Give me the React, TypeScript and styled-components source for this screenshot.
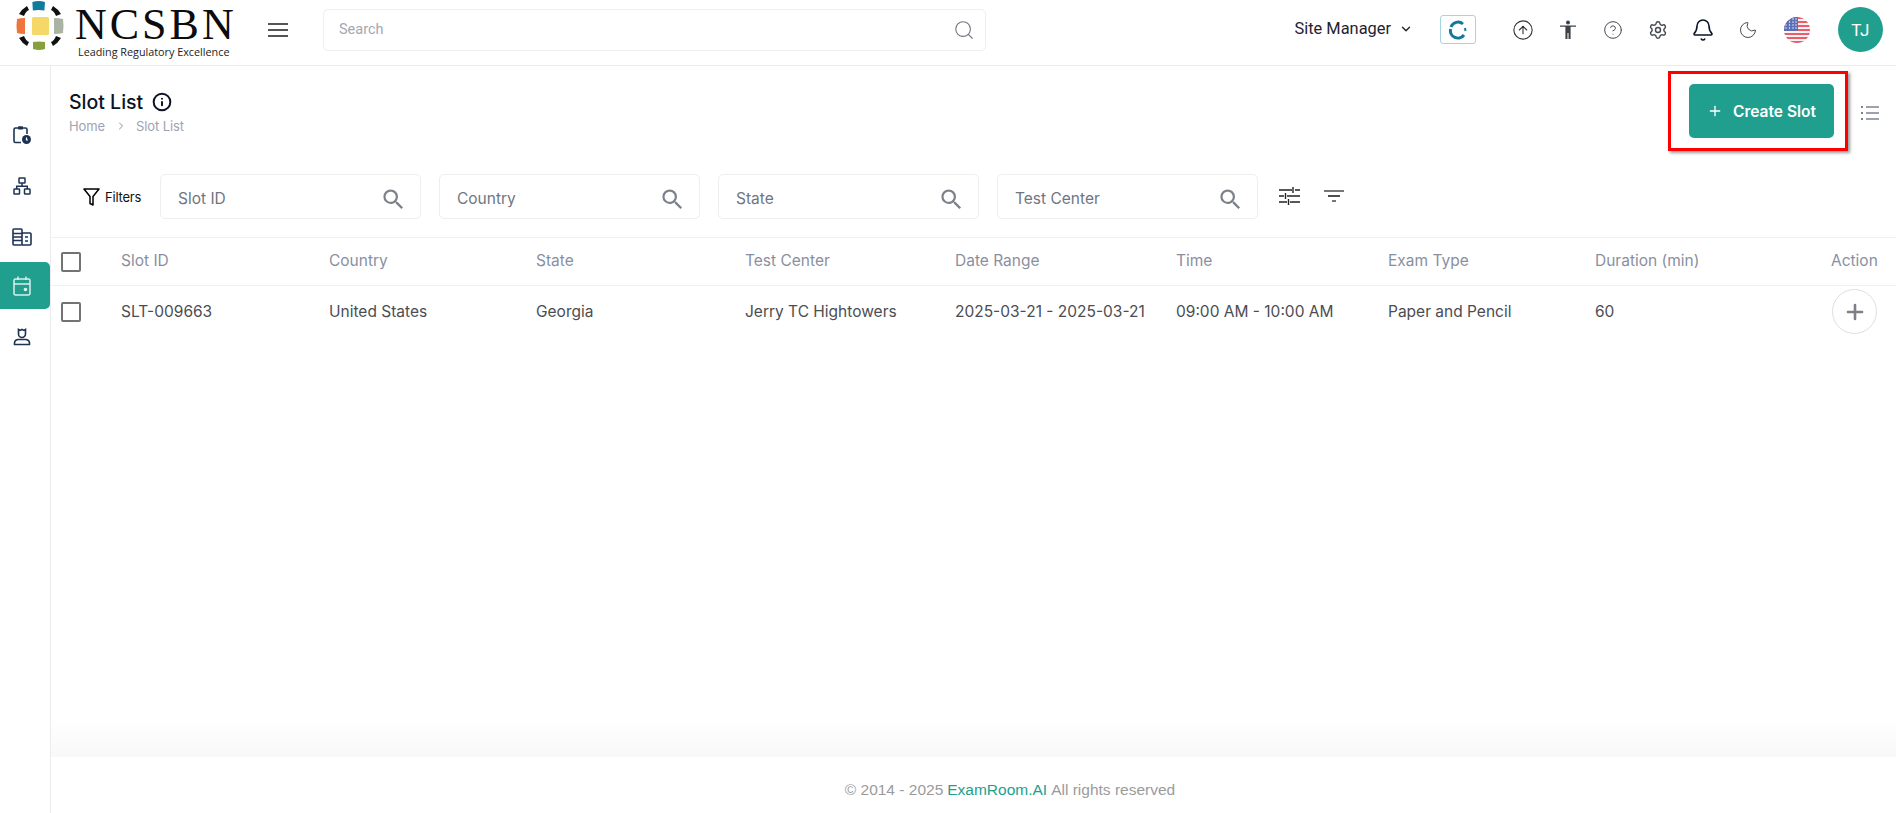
import React from "react";
import styled, { createGlobalStyle } from "styled-components";
import { Search, Info, ChevronDown, ChevronRight, Plus, Settings, Bell, Moon, CircleHelp, CircleArrowUp } from "lucide-react";
import { MdSearch } from "react-icons/md";

const Global = createGlobalStyle`
  html, body { margin: 0; padding: 0; background: #fff; }
  body { font-family: Inter, "Liberation Sans", sans-serif; color: #1b2230; }
  * { box-sizing: border-box; }
`;

const Page = styled.div`
  width: 1896px;
  height: 813px;
  display: flex;
  flex-direction: column;
  overflow: hidden;
  background: #fff;
`;

const TopBar = styled.header`
  height: 66px;
  flex: none;
  display: flex;
  align-items: center;
  padding-bottom: 6px;
  border-bottom: 1px solid #e9ebee;
`;

const LogoBlock = styled.div`
  width: 268px;
  flex: none;
  display: flex;
  padding-left: 16px;
  align-items: flex-start;
  height: 59px;
`;

const LogoText = styled.div`
  margin-left: 9px;
  display: flex;
  flex-direction: column;
  padding-top: 4px;
`;

const Wordmark = styled.span`
  font-family: "Liberation Serif", serif;
  font-size: 44px;
  line-height: 41px;
  letter-spacing: 3px;
  color: #0c0c0c;
`;

const Tagline = styled.span`
  font-family: "Open Sans", sans-serif;
  font-size: 10.8px;
  line-height: 14px;
  margin-left: 3px;
  color: #222;
  white-space: nowrap;
`;

const Burger = styled.div`
  width: 20px;
  height: 14px;
  flex: none;
  border-top: 2px solid #555;
  border-bottom: 2px solid #555;
  position: relative;
  margin-right: 35px;
  &::after {
    content: "";
    position: absolute;
    left: 0;
    right: 0;
    top: 4px;
    height: 2px;
    background: #555;
  }
`;

const SearchBox = styled.div`
  width: 663px;
  height: 42px;
  flex: none;
  border: 1px solid #eceef1;
  border-radius: 5px;
  display: flex;
  align-items: center;
  justify-content: space-between;
  padding: 0 10px 0 15px;
  font-size: 14.5px;
  color: #a3a7b1;
  font-family: "Roboto", sans-serif;
`;

const TopRight = styled.div`
  margin-left: auto;
  display: flex;
  align-items: center;
  padding-right: 13px;
`;

const RoleText = styled.span`
  font-family: "Roboto", sans-serif;
  font-size: 16.4px;
  color: #1d2330;
  margin-right: 8px;
  margin-top: -3px;
`;

const Caret = styled.span`
  display: flex;
  margin-top: -2px;
`;

const SyncBox = styled.div`
  width: 36px;
  height: 29px;
  margin: 0 25px 0 27px;
  border: 1px solid #a9d3de;
  border-radius: 3px;
  display: flex;
  align-items: center;
  justify-content: center;
`;

const TopIcon = styled.span<{ $c?: string; $shift?: number }>`
  width: 46px;
  margin-left: ${(p) => p.$shift ?? -1}px;
  display: flex;
  justify-content: center;
  align-items: center;
  color: ${(p) => p.$c || "#454a52"};
`;

const Avatar = styled.div`
  width: 45px;
  height: 45px;
  margin-left: 18px;
  border-radius: 50%;
  background: #219f8e;
  color: #fff;
  display: flex;
  align-items: center;
  justify-content: center;
  font-size: 17px;
  font-family: "Roboto", sans-serif;
  letter-spacing: 0.5px;
`;

const Body = styled.div`
  flex: 1;
  display: flex;
  min-height: 0;
`;

const SideNav = styled.nav`
  width: 51px;
  flex: none;
  border-right: 1px solid #e9ebee;
  display: flex;
  flex-direction: column;
  padding-top: 43px;
`;

const NavItem = styled.div<{ $active?: boolean; $h?: number }>`
  height: ${(p) => p.$h || 51}px;
  width: 50px;
  display: flex;
  align-items: center;
  justify-content: center;
  padding-right: 6px;
  color: ${(p) => (p.$active ? "#d9f0ec" : "#1d3354")};
  background: ${(p) => (p.$active ? "#219f8e" : "transparent")};
  border-radius: 0 5px 5px 0;
`;

const Main = styled.main`
  flex: 1;
  min-width: 0;
  display: flex;
  flex-direction: column;
`;

const Content = styled.div`
  flex: 1;
  min-height: 0;
  display: flex;
  flex-direction: column;
  background: linear-gradient(to bottom, #fff 0, #fff 650px, #f8f8f8 100%);
`;

const PageHead = styled.div`
  height: 108px;
  flex: none;
  display: flex;
  justify-content: space-between;
  align-items: flex-start;
  padding: 5px 17px 0 18px;
`;

const TitleBlock = styled.div`
  padding-top: 18px;
`;

const TitleRow = styled.div`
  display: flex;
  align-items: center;
  gap: 9px;
  font-size: 19.5px;
  line-height: 26px;
  font-weight: 500;
  color: #0b1426;
`;

const Crumbs = styled.div`
  display: flex;
  align-items: center;
  margin-top: 2px;
  font-size: 13px;
  line-height: 18px;
  color: #9ea3b0;
  letter-spacing: -0.1px;
`;

const CrumbSep = styled.span`
  display: flex;
  margin: 0 9px 0 10px;
  color: #8a8f9c;
`;

const ActionArea = styled.div`
  display: flex;
  align-items: center;
`;

const Highlight = styled.div`
  width: 180px;
  height: 80px;
  border: 3px solid #f00;
  box-shadow: 2px 2px 3px #999;
  display: flex;
  align-items: center;
  padding-left: 18px;
  margin-right: 13px;
`;

const CreateButton = styled.button`
  width: 145px;
  height: 54px;
  border: 0;
  border-radius: 5px;
  background: #219f8e;
  color: #fff;
  display: flex;
  align-items: center;
  justify-content: center;
  gap: 10px;
  font-family: Inter, sans-serif;
  font-size: 15.5px;
  font-weight: 600;
`;

const ListGlyph = styled.span`
  color: #7d8292;
  display: flex;
  margin-top: 4px;
`;

const FilterRow = styled.div`
  height: 63px;
  flex: none;
  display: flex;
  align-items: flex-start;
  padding-left: 32px;
`;

const FilterLabel = styled.div`
  width: 77px;
  height: 45px;
  display: flex;
  align-items: center;
  gap: 5px;
  font-size: 13px;
  letter-spacing: -0.2px;
  color: #111;
`;

const FilterField = styled.div`
  width: 261px;
  height: 45px;
  margin-right: 18px;
  border: 1px solid #eceef1;
  border-radius: 5px;
  display: flex;
  align-items: center;
  justify-content: space-between;
  padding: 0 13px 0 17px;
  font-size: 15.5px;
  color: #70757f;
`;

const FieldText = styled.span`
  margin-top: 3px;
`;

const FieldGlyph = styled.span`
  display: flex;
  color: #7c808b;
  margin-top: 5px;
`;

const ToolGlyph = styled.span<{ $gap: number; $top: number }>`
  display: flex;
  margin-left: ${(p) => p.$gap}px;
  margin-top: ${(p) => p.$top}px;
`;

const Row = styled.div<{ $head?: boolean }>`
  display: grid;
  grid-template-columns: 60px 208px 207px 209px 210px 221px 212px 207px 236px 47px;
  align-items: center;
  padding-left: 10px;
  height: ${(p) => (p.$head ? 48 : 52)}px;
  border-top: 1px solid #eef0f2;
  font-size: 15.5px;
  color: ${(p) => (p.$head ? "#8a8f9f" : "#4b4d52")};
  white-space: nowrap;
`;

const Cell = styled.span<{ $lift: number }>`
  margin-top: -${(p) => p.$lift}px;
`;

const Check = styled.span`
  width: 20px;
  height: 20px;
  border: 2px solid #737373;
  border-radius: 2px;
  display: block;
`;

const RoundAdd = styled.button`
  width: 45px;
  height: 45px;
  margin-left: 1px;
  border: 1px solid #dcdfe6;
  border-radius: 50%;
  background: #fff;
  color: #7f7f88;
  display: flex;
  align-items: center;
  justify-content: center;
  padding: 0;
`;

const Footer = styled.footer`
  height: 56px;
  flex: none;
  background: #fff;
  display: flex;
  align-items: center;
  justify-content: center;
  padding: 10px 0 0 73px;
  font-family: "Liberation Sans", sans-serif;
  font-size: 15.5px;
  color: #9b9b9b;
`;

const FooterLink = styled.span`
  color: #219f8e;
  margin: 0 4px;
`;

const Mark = () => (
  <svg width="50" height="52" viewBox="0 0 50 52">
    <path d="M17 3.5 Q23 1.5 29 3.5 L28.5 12 Q23 11 17.5 12 Z" transform="translate(-1.5 -1.5) scale(1.05 1)" fill="#0f7c9c" />
    <path d="M1 19 Q4 18 9 18 L9 34 Q4 34 1 33 Q0 26 1 19 Z" fill="#f0743e" />
    <rect x="16" y="17" width="17" height="18" rx="1.5" fill="#f5d868" />
    <path d="M38 18 Q43 18 47 19 Q48 26 47 33 Q43 34 38 34 Z" fill="#abb3a4" />
    <path d="M17 42 Q23 41 29 42 L29 49 Q23 51 17 49 Z" fill="#86a03c" />
    <path d="M3 14 Q6 9 11 6 L13 10 Q10 11 8 16 Z" fill="#111" />
    <path d="M45 14 Q42 9 37 6 L35 10 Q38 11 40 16 Z" fill="#111" />
    <path d="M3 38 Q6 43 11 46 L13 42 Q10 41 8 36 Z" fill="#111" />
    <path d="M45 38 Q42 43 37 46 L35 42 Q38 41 40 36 Z" fill="#111" />
  </svg>
);

const SyncGlyph = () => (
  <svg width="20" height="20" viewBox="0 0 20 20" fill="none" stroke="#14789b" strokeWidth="3">
    <path d="M15 4 A7.5 7.5 0 0 0 3 7" />
    <path d="M2.6 9 A7.5 7.5 0 0 0 16 15" />
    <path d="M17 8 L17.5 11" strokeWidth="2" />
  </svg>
);

const Person = () => (
  <svg width="18" height="20" viewBox="0 0 18 20" fill="#3d4148">
    <circle cx="9" cy="2.4" r="2" />
    <path d="M1 5.6 H17 V6.8 H11.6 V19 H9.5 V13 H8.5 V19 H6.4 V6.8 H1 Z" />
  </svg>
);

const Flag = () => (
  <svg width="26" height="26" viewBox="0 0 26 26">
    <defs>
      <clipPath id="flagClip"><circle cx="13" cy="13" r="13" /></clipPath>
    </defs>
    <g clipPath="url(#flagClip)">
      <rect width="26" height="26" fill="#f4f4f6" />
      {[1, 5, 9, 13, 17, 21, 25].map((y) => (
        <rect key={y} x="0" y={y - 1} width="26" height="2" fill="#ee5c6a" />
      ))}
      <rect width="14" height="14" fill="#5b6fb5" />
      {[2, 5, 8, 11].map((y) =>
        [2, 5.5, 9, 12].map((x) => <circle key={`${x}-${y}`} cx={x} cy={y} r="0.7" fill="#fff" />)
      )}
    </g>
  </svg>
);

const ClipClock = () => (
  <svg width="20" height="20" viewBox="0 0 20 20" fill="none" stroke="currentColor" strokeWidth="1.6">
    <path d="M9 17.5 H3.5 Q2 17.5 2 16 V4.5 Q2 3 3.5 3 H13.5 Q15 3 15 4.5 V9" />
    <rect x="6" y="1.2" width="5" height="3.2" fill="currentColor" stroke="none" rx="0.6" />
    <circle cx="14.5" cy="14.5" r="4.5" fill="currentColor" stroke="none" />
    <path d="M14.5 12.5 V15 H16" stroke="#fff" strokeWidth="1.2" />
  </svg>
);

const OrgChart = () => (
  <svg width="18" height="18" viewBox="0 0 18 18" fill="none" stroke="currentColor" strokeWidth="1.5">
    <rect x="6" y="1" width="6" height="5" rx="0.6" />
    <rect x="1" y="12" width="5.5" height="5" rx="0.6" />
    <rect x="11.5" y="12" width="5.5" height="5" rx="0.6" />
    <path d="M9 6 V9 M3.7 12 V9.2 H14.3 V12" />
  </svg>
);

const Buildings = () => (
  <svg width="20" height="18" viewBox="0 0 20 18" fill="none" stroke="currentColor" strokeWidth="1.6">
    <rect x="1" y="1" width="9" height="16" rx="1" />
    <path d="M1 5.5 H10 M1 9 H10 M1 12.5 H10" />
    <path d="M10 5 H18 Q19 5 19 6 V16 Q19 17 18 17 H10" />
    <path d="M13 9 H16 M13 13 H16" />
  </svg>
);

const CalendarDot = () => (
  <svg width="18" height="20" viewBox="0 0 18 20" fill="none" stroke="currentColor" strokeWidth="1.5">
    <rect x="1" y="3" width="16" height="16" rx="1.4" />
    <path d="M1 8 H17 M5 0.5 V4 M13 0.5 V4" />
    <circle cx="12.5" cy="13.5" r="1.8" fill="currentColor" stroke="none" />
  </svg>
);

const UserBadge = () => (
  <svg width="18" height="18" viewBox="0 0 18 18" fill="none" stroke="currentColor" strokeWidth="1.6">
    <path d="M5.5 1.5 L7 2.4 L9 1.5 L11 2.4 L12.5 1.5 V6 A3.5 3.5 0 0 1 5.5 6 Z" />
    <path d="M1.5 16.5 Q1 12 5 11.5 H13 Q17 12 16.5 16.5 Z" />
  </svg>
);

const Funnel = () => (
  <svg width="17" height="18" viewBox="0 0 17 18" fill="none" stroke="#000" strokeWidth="1.5">
    <path d="M1 1 H16 L10 8.5 V17 L7 15.5 V8.5 Z" strokeLinejoin="round" />
  </svg>
);

const Sliders = () => (
  <svg width="21" height="18" viewBox="0 0 21 18" fill="none" stroke="#222" strokeWidth="1.4">
    <path d="M0 3 H13 M16 3 H21 M14 0 V6" />
    <path d="M0 9 H5 M8 9 H21 M6.5 6 V12" />
    <path d="M0 15 H8 M11 15 H21 M9.5 12 V18" />
  </svg>
);

const SortLines = () => (
  <svg width="20" height="13" viewBox="0 0 20 13" fill="none" strokeWidth="1.6">
    <path d="M0 1 H20" stroke="#555" />
    <path d="M4 6 H16" stroke="#222" />
    <path d="M8 11 H12" stroke="#555" />
  </svg>
);

const ListLines = () => (
  <svg width="18" height="16" viewBox="0 0 18 16" fill="none" stroke="currentColor" strokeWidth="1.7">
    <path d="M5 2 H18 M5 8 H18 M5 14 H18" />
    <path d="M0 2 H2 M0 8 H2 M0 14 H2" strokeWidth="2.2" />
  </svg>
);

const fields = ["Slot ID", "Country", "State", "Test Center"];
const cols = ["Slot ID", "Country", "State", "Test Center", "Date Range", "Time", "Exam Type", "Duration (min)"];
const data = ["SLT-009663", "United States", "Georgia", "Jerry TC Hightowers", "2025-03-21 - 2025-03-21", "09:00 AM - 10:00 AM", "Paper and Pencil", "60"];

export default function App() {
  return (
    <Page>
      <Global />
      <TopBar>
        <LogoBlock>
          <Mark />
          <LogoText>
            <Wordmark>NCSBN</Wordmark>
            <Tagline>Leading Regulatory Excellence</Tagline>
          </LogoText>
        </LogoBlock>
        <Burger />
        <SearchBox>
          Search
          <Search size={22} strokeWidth={1.2} color="#6f7480" />
        </SearchBox>
        <TopRight>
          <RoleText>Site Manager</RoleText>
          <Caret><ChevronDown size={14} strokeWidth={2.4} color="#222" /></Caret>
          <SyncBox><SyncGlyph /></SyncBox>
          <TopIcon $c="#333"><CircleArrowUp size={22} strokeWidth={1.2} /></TopIcon>
          <TopIcon><Person /></TopIcon>
          <TopIcon><CircleHelp size={20} strokeWidth={1.2} /></TopIcon>
          <TopIcon><Settings size={20} strokeWidth={1.7} /></TopIcon>
          <TopIcon $c="#0b1426"><Bell size={24} strokeWidth={1.6} /></TopIcon>
          <TopIcon><Moon size={20} strokeWidth={1.2} /></TopIcon>
          <TopIcon $shift={3}><Flag /></TopIcon>
          <Avatar>TJ</Avatar>
        </TopRight>
      </TopBar>
      <Body>
        <SideNav>
          <NavItem><ClipClock /></NavItem>
          <NavItem><OrgChart /></NavItem>
          <NavItem><Buildings /></NavItem>
          <NavItem $active $h={47}><CalendarDot /></NavItem>
          <NavItem $h={56}><UserBadge /></NavItem>
        </SideNav>
        <Main>
          <Content>
            <PageHead>
              <TitleBlock>
                <TitleRow>
                  Slot List
                  <Info size={20} strokeWidth={2.4} color="#0b1426" />
                </TitleRow>
                <Crumbs>
                  Home
                  <CrumbSep><ChevronRight size={12} /></CrumbSep>
                  Slot List
                </Crumbs>
              </TitleBlock>
              <ActionArea>
                <Highlight>
                  <CreateButton>
                    <Plus size={16} strokeWidth={2} />
                    Create Slot
                  </CreateButton>
                </Highlight>
                <ListGlyph><ListLines /></ListGlyph>
              </ActionArea>
            </PageHead>
            <FilterRow>
              <FilterLabel><Funnel />Filters</FilterLabel>
              {fields.map((f) => (
                <FilterField key={f}>
                  <FieldText>{f}</FieldText>
                  <FieldGlyph><MdSearch size={27} /></FieldGlyph>
                </FilterField>
              ))}
              <ToolGlyph $gap={3} $top={13}><Sliders /></ToolGlyph>
              <ToolGlyph $gap={24} $top={16}><SortLines /></ToolGlyph>
            </FilterRow>
            <Row $head>
              <Check />
              {cols.map((c) => <Cell $lift={2} key={c}>{c}</Cell>)}
              <Cell $lift={2}>Action</Cell>
            </Row>
            <Row>
              <Check />
              {data.map((c) => <Cell $lift={1} key={c}>{c}</Cell>)}
              <RoundAdd><Plus size={24} strokeWidth={2.6} /></RoundAdd>
            </Row>
          </Content>
          <Footer>
            © 2014 - 2025<FooterLink>ExamRoom.AI</FooterLink>All rights reserved
          </Footer>
        </Main>
      </Body>
    </Page>
  );
}
